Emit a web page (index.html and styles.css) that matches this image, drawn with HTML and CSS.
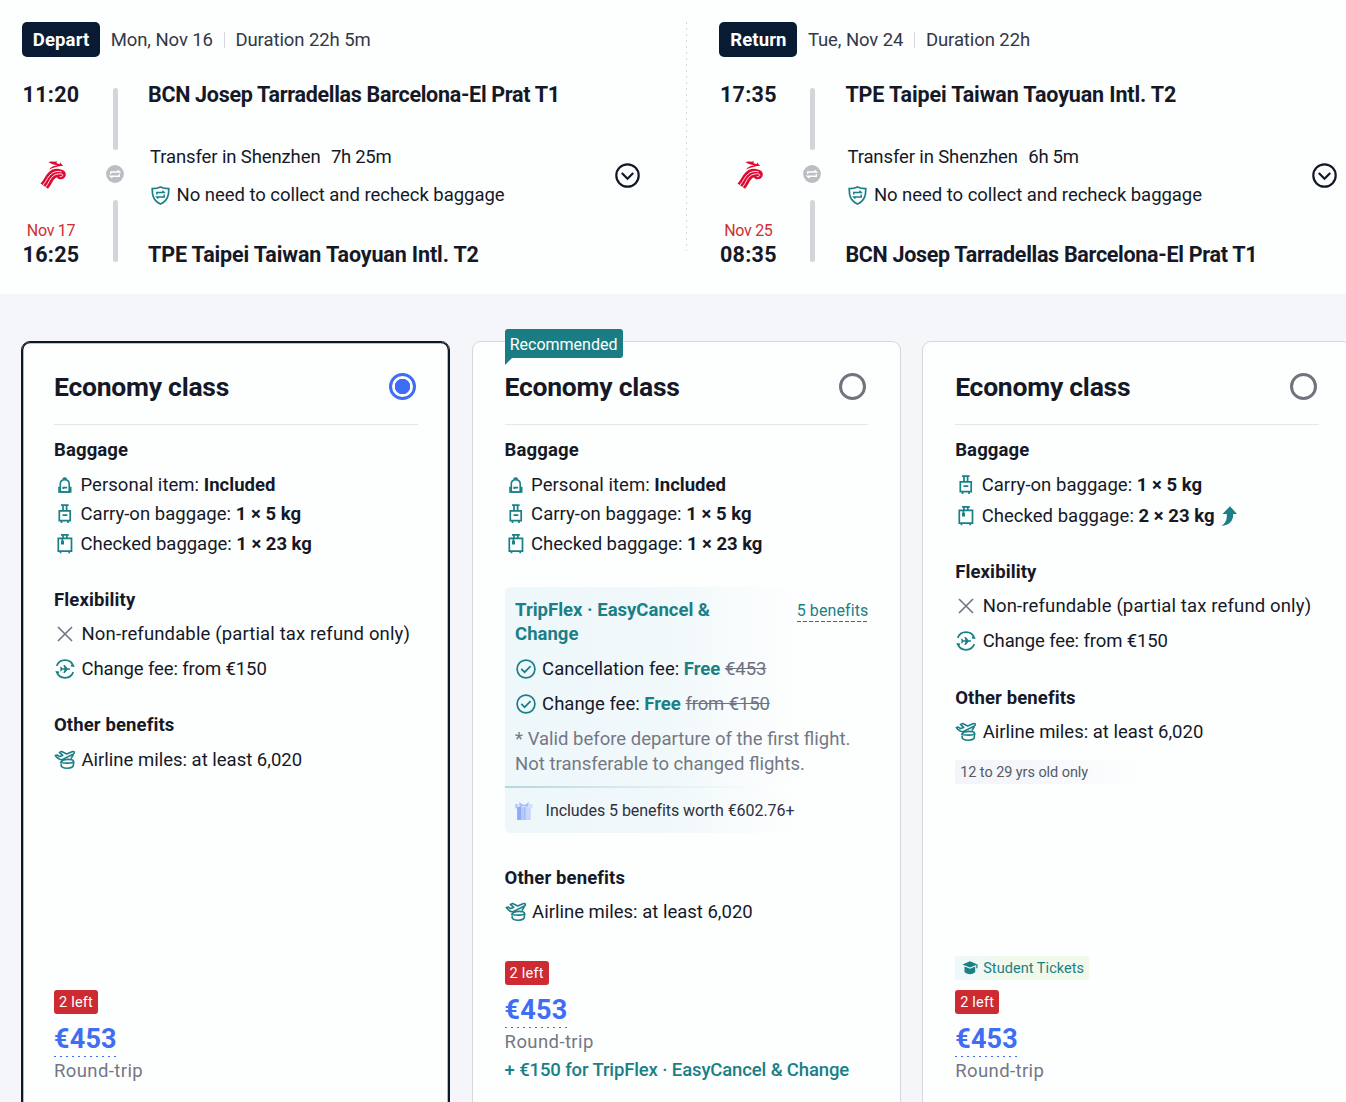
FILE: index.html
```html
<!DOCTYPE html>
<html lang="en">
<head>
  <meta charset="UTF-8" />
  <meta name="viewport" content="width=device-width, initial-scale=1.0" />
  <title>Select your fare</title>
  <link rel="stylesheet" href="styles.css">
</head>
<body>
  <!-- Shared icons -->
  <svg class="sprite" aria-hidden="true">
    <symbol id="i-logo" viewBox="0 0 26 28">
      <path d="M.5 22.5C5 17.5 6.500 11.500 12 8.700 15.500 7.400 19 7.800 21 8.600 24.500 9.300 26 11.500 25.800 14 25.500 17 22.500 18.600 19.500 18.200 17.800 17.800 17 16.800 17 16.200 13 17.500 12 23 8 27.700Z" fill="#df0a32"/>
      <path d="M2.600 24.600C7 19.500 8 14.500 12.500 12 15.500 10.300 18.500 10.100 21.500 10.800M5.400 26.400C9.500 21 10.200 16.500 14 14.300 16.500 12.900 20.500 12.300 22.300 13.200 23.500 14.600 22 16 19.700 15.600" fill="none" stroke="#fdfefe" stroke-width=".9"/>
      <path d="M9 8.600C11 5.800 14 4.600 17.500 4.200L13.500 3.500C11.500 3.100 10.500 1.600 8.300 1.200 11-.2 13.500 1.300 17 .3L16.400 2 19.300 3.200 20.700 1.600C21.200 3.300 22.500 4.200 23.300 4.800 17 5.500 13 6.500 9 8.600Z" fill="#df0a32"/>
    </symbol>
    <symbol id="i-transfer" viewBox="0 0 18 18">
      <circle cx="9" cy="9" r="8.900" fill="#bbbdc2"/>
      <path d="M4.700 9V7h8.800L11.600 5.300M13.300 9v2.200H4.500L6.400 12.900" fill="none" stroke="#fff" stroke-width="1.400"/>
    </symbol>
    <symbol id="i-shield" viewBox="0 0 19 19">
      <g fill="none" stroke="#1b7f86" stroke-width="1.700">
        <path d="M9.500 1C7 2.400 4.200 2.700 1.200 2.700 1.200 9 2 14.500 9.500 18 17 14.500 17.800 9 17.800 2.700 14.800 2.700 12 2.400 9.500 1Z"/>
        <path d="M5.800 8.600V6.400h7.200L11.500 4.900M13.200 8.400v2.600H5.800L7.300 12.600" stroke-width="1.500"/>
      </g>
    </symbol>
    <symbol id="i-expand" viewBox="0 0 25 25">
      <g fill="none" stroke="#11182a" stroke-width="2.200">
        <circle cx="12.500" cy="12.500" r="11.200"/>
        <path d="m6.800 10 5.700 5.700 5.700-5.700"/>
      </g>
    </symbol>
    <symbol id="i-personal" viewBox="0 0 22 22">
      <g fill="none" stroke="#1b7f86" stroke-width="1.600">
        <path d="M6.300 18V10C6.300 7.200 8 5.700 10.700 5.700S15.200 7.200 15.200 10V18Z"/>
        <path d="M6 13.500H5V18h11.700v-4.500h-1M9 5.600c0-2 3.400-2 3.400 0M8.400 13.600h4.700M9.300 13.400v1.500"/>
      </g>
    </symbol>
    <symbol id="i-carry" viewBox="0 0 22 22">
      <path d="M7 2.200h7.600M9 2.200v5.500M12.600 2.200v5.500M5.300 7.900h10.900v9.700H5.300ZM8.500 12.100h4.800M7.500 18v2M14 18v2" fill="none" stroke="#1b7f86" stroke-width="1.700"/>
    </symbol>
    <symbol id="i-checked" viewBox="0 0 22 22">
      <path d="M7 1.900h7.800M9 2v3.500M12.800 2v3.500M4.300 5.400h13.200v12.800H4.300ZM6.500 18.400v1.800M15.200 18.400v1.800M8.400 5.600v3" fill="none" stroke="#1b7f86" stroke-width="1.700"/>
      <path d="M7 7.800h3v3.700H7Z" fill="#1b7f86"/>
    </symbol>
    <symbol id="i-cross" viewBox="0 0 22 22">
      <path d="m4 4 14 14M18 4 4 18" fill="none" stroke="#71747f" stroke-width="1.600"/>
    </symbol>
    <symbol id="i-change" viewBox="0 0 22 22">
      <path d="M2.700 7.900a8.900 8.900 0 0 1 16.600 0l-2.400-.3M19.300 14.100a8.900 8.900 0 0 1-16.600 0l2.400.3" fill="none" stroke="#1b7f86" stroke-width="1.700"/>
      <path d="M6 8.800h1l1.400 1.500h2.100L9.300 7h1.400l2.900 3.300h2.100q1.300.7 0 1.400h-2.100L10.700 15H9.300l1.200-3.300H8.400L7 13.200H6l.6-2.200Z" fill="#1b7f86"/>
    </symbol>
    <symbol id="i-miles" viewBox="0 0 22 22">
      <g fill="none" stroke="#1b7f86" stroke-width="1.600" stroke-linejoin="round">
        <path d="M1.300 6.600 3.300 6 5.300 7.600 8.700 6.400 5.400 3.400 7.700 2.600 12.700 4.900 18 2.700C20.700 2 21.200 4 19 5.200L8 10.600C5 11.200 3.500 9.500 1.300 6.600Z"/>
        <path d="M19.300 5.500 17 9.700M6.500 14C7.500 11.500 10.500 10.400 13.800 10.400s5.700.7 5.700 1.800-2.500 1.900-5.700 1.900S8.500 13.800 6.500 13.600M7.300 15c-1 2.800 1.700 4.200 6 4.200s7-1.700 5.800-4.300M19.500 12.300c.5 1.500.3 2.300-.4 2.800"/>
      </g>
    </symbol>
    <symbol id="i-check" viewBox="0 0 22 22">
      <g fill="none" stroke="#1b7f86" stroke-width="1.700">
        <circle cx="11" cy="11" r="8.900"/>
        <path d="m6.300 10.900 3.300 3.300 6-6"/>
      </g>
    </symbol>
    <symbol id="i-gift" viewBox="0 0 18 19">
      <path d="M2.200 6h13.600v13H2.200Z" fill="#c8d6fc"/>
      <path d="M.5 3h17v4.200H.5Z" fill="#d5dffd"/>
      <path d="M2.200 6h4.300v13H2.200Z" fill="#8fabf5"/>
      <path d="M8.800 6h1.700v13H8.800ZM.5 3.200l1.200-.5v4.500H.5Z" fill="#a3b9f8"/>
      <path d="M4 1l5 3.500L14 .8 12.500 6 9 4.700 5 6Z" fill="#a9bef9"/>
      <path d="M6 6.500h2.200V19H6Z" fill="#b5c7fa"/>
    </symbol>
    <symbol id="i-cap" viewBox="0 0 16 14">
      <path d="M8 .3 15.500 3.400 8 6.500.4 3.400ZM2.500 5.600 8 7.800l5.200-2.200v5.600C11.500 12.500 9.700 13.200 8 13.200S4.300 12.500 2.500 11.200Z" fill="#1b7f86"/>
      <path d="M14.900 3.500v3.800" stroke="#1b7f86" stroke-width="1.300"/>
    </symbol>
    <symbol id="i-up" viewBox="0 0 16 20">
      <path d="M9 .2 16 8H12.200C12.500 14 9 19.500.2 19.800 4.500 17.500 6 14 5.800 8H1.500Z" fill="#1b7f86"/>
    </symbol>
  </svg>

  <div class="flights">
    <section class="flight">
      <div class="flight-head">
        <span class="badge">Depart</span>
        <span class="date">Mon, Nov 16</span>
        <span class="duration">Duration 22h 5m</span>
      </div>
      <div class="route">
        <div class="times">
          <b>11:20</b>
          <svg class="logo"><use href="#i-logo"/></svg>
          <span class="next-day">Nov 17</span>
          <b>16:25</b>
        </div>
        <div class="track">
          <i></i>
          <svg><use href="#i-transfer"/></svg>
          <i></i>
        </div>
        <div class="stops">
          <b class="long">BCN Josep Tarradellas Barcelona-El Prat T1</b>
          <div class="transfer">Transfer in Shenzhen <span>7h 25m</span></div>
          <div class="recheck"><svg><use href="#i-shield"/></svg>No need to collect and recheck baggage</div>
          <b>TPE Taipei Taiwan Taoyuan Intl. T2</b>
        </div>
        <svg class="expand"><use href="#i-expand"/></svg>
      </div>
    </section>
    <div class="flight-divider"></div>
    <section class="flight">
      <div class="flight-head">
        <span class="badge">Return</span>
        <span class="date">Tue, Nov 24</span>
        <span class="duration">Duration 22h</span>
      </div>
      <div class="route">
        <div class="times">
          <b>17:35</b>
          <svg class="logo"><use href="#i-logo"/></svg>
          <span class="next-day">Nov 25</span>
          <b>08:35</b>
        </div>
        <div class="track">
          <i></i>
          <svg><use href="#i-transfer"/></svg>
          <i></i>
        </div>
        <div class="stops">
          <b>TPE Taipei Taiwan Taoyuan Intl. T2</b>
          <div class="transfer">Transfer in Shenzhen <span>6h 5m</span></div>
          <div class="recheck"><svg><use href="#i-shield"/></svg>No need to collect and recheck baggage</div>
          <b class="long">BCN Josep Tarradellas Barcelona-El Prat T1</b>
        </div>
        <svg class="expand"><use href="#i-expand"/></svg>
      </div>
    </section>
  </div>

  <main class="fares">
    <article class="card selected">
      <header class="card-head"><h2>Economy class</h2><span class="radio on"></span></header>
      <h3>Baggage</h3>
      <ul class="bags">
        <li><svg><use href="#i-personal"/></svg><span>Personal item: <b>Included</b></span></li>
        <li><svg><use href="#i-carry"/></svg><span>Carry-on baggage: <b>1 × 5 kg</b></span></li>
        <li><svg><use href="#i-checked"/></svg><span class="snug">Checked baggage: <b>1 × 23 kg</b></span></li>
      </ul>
      <h3>Flexibility</h3>
      <ul class="rules">
        <li><svg><use href="#i-cross"/></svg><span class="wide">Non-refundable (partial tax refund only)</span></li>
        <li><svg><use href="#i-change"/></svg><span class="narrow">Change fee: from €150</span></li>
      </ul>
      <h3>Other benefits</h3>
      <ul class="rules">
        <li><svg><use href="#i-miles"/></svg><span>Airline miles: at least 6,020</span></li>
      </ul>
      <footer>
        <span class="left">2 left</span>
        <span class="price">€453</span>
        <span class="trip">Round-trip</span>
      </footer>
    </article>

    <article class="card">
      <span class="ribbon">Recommended</span>
      <header class="card-head"><h2>Economy class</h2><span class="radio"></span></header>
      <h3>Baggage</h3>
      <ul class="bags">
        <li><svg><use href="#i-personal"/></svg><span>Personal item: <b>Included</b></span></li>
        <li><svg><use href="#i-carry"/></svg><span>Carry-on baggage: <b>1 × 5 kg</b></span></li>
        <li><svg><use href="#i-checked"/></svg><span class="snug">Checked baggage: <b>1 × 23 kg</b></span></li>
      </ul>
      <div class="flex-box">
        <div class="flex-head">
          <b>TripFlex · EasyCancel &amp;<br>Change</b>
          <a>5 benefits</a>
        </div>
        <ul class="rules">
          <li><svg><use href="#i-check"/></svg><span>Cancellation fee: <em>Free</em> <s>€453</s></span></li>
          <li><svg><use href="#i-check"/></svg><span>Change fee: <em>Free</em> <s class="narrow">from €150</s></span></li>
        </ul>
        <p>* Valid before departure of the first flight.<br>Not transferable to changed flights.</p>
        <div class="gift"><svg><use href="#i-gift"/></svg>Includes 5 benefits worth €602.76+</div>
      </div>
      <h3>Other benefits</h3>
      <ul class="rules">
        <li><svg><use href="#i-miles"/></svg><span>Airline miles: at least 6,020</span></li>
      </ul>
      <footer>
        <span class="left">2 left</span>
        <span class="price">€453</span>
        <span class="trip">Round-trip</span>
        <span class="extra">+ €150 for TripFlex · EasyCancel &amp; Change</span>
      </footer>
    </article>

    <article class="card">
      <header class="card-head"><h2>Economy class</h2><span class="radio"></span></header>
      <h3>Baggage</h3>
      <ul class="bags">
        <li><svg><use href="#i-carry"/></svg><span>Carry-on baggage: <b>1 × 5 kg</b></span></li>
        <li class="upgraded"><svg><use href="#i-checked"/></svg><span>Checked baggage: <b>2 × 23 kg</b></span><svg class="up"><use href="#i-up"/></svg></li>
      </ul>
      <h3>Flexibility</h3>
      <ul class="rules">
        <li><svg><use href="#i-cross"/></svg><span class="wide">Non-refundable (partial tax refund only)</span></li>
        <li><svg><use href="#i-change"/></svg><span class="narrow">Change fee: from €150</span></li>
      </ul>
      <h3>Other benefits</h3>
      <ul class="rules">
        <li><svg><use href="#i-miles"/></svg><span>Airline miles: at least 6,020</span></li>
      </ul>
      <div class="age">12 to 29 yrs old only</div>
      <footer>
        <span class="student"><svg><use href="#i-cap"/></svg>Student Tickets</span>
        <span class="left">2 left</span>
        <span class="price">€453</span>
        <span class="trip">Round-trip</span>
      </footer>
    </article>
  </main>
</body>
</html>
```
FILE: styles.css
```css
* { box-sizing: border-box; }

html, body {
  margin: 0;
  padding: 0;
  height: 1102px;
  overflow: hidden;
}

body {
  background-color: #f5f6fa;
  color: #151927;
  font-family: Roboto, "Liberation Sans", sans-serif;
  font-size: 18.5px;
  line-height: 24px;
}

h2, h3, p, ul { margin: 0; padding: 0; }
ul { list-style: none; }
svg { display: block; flex: none; }
.sprite { display: none; }

/* ===== Flights ===== */
.flights {
  height: 294px;
  padding: 22px 0 0 22px;
  background-color: #fdfefe;
  display: flex;
  white-space: nowrap;
}

.flight { width: 664px; flex: none; }

.flight-divider {
  width: 33.4px;
  height: 229px;
  flex: none;
  background: repeating-linear-gradient(#d3d5d9 0 2px, transparent 2px 6px) 0 0 / 1px 100% no-repeat;
}

.flight-head {
  display: flex;
  align-items: center;
  height: 35px;
  color: #333847;
  letter-spacing: -0.08px;
}

.badge {
  padding: 0 10.8px;
  height: 35px;
  line-height: 36px;
  border-radius: 5px;
  background-color: #081b33;
  color: #fff;
  font-weight: 700;
  letter-spacing: 0.13px;
}

.date { margin-left: 10.5px; }

.duration {
  margin-left: 11px;
  padding-left: 11.5px;
  background: linear-gradient(#d5d7dc, #d5d7dc) 0 4px / 1px 16px no-repeat;
}

.route {
  display: flex;
  padding-top: 26px;
}

.route b { font-size: 21.5px; }

.times {
  width: 58px;
  display: flex;
  flex-direction: column;
  align-items: center;
}
.times b { letter-spacing: 0.3px; }

.logo {
  width: 26px;
  height: 28px;
  margin: 54px 0 30px 4px;
}

.next-day {
  color: #d02f32;
  font-size: 16px;
  letter-spacing: -0.3px;
}

.track {
  width: 18px;
  margin: 5px 0 0 26px;
  display: flex;
  flex-direction: column;
  align-items: center;
}
.track i {
  width: 5px;
  height: 62px;
  border-radius: 3px;
  background-color: #d4d5da;
}
.track svg {
  width: 18px;
  height: 18px;
  margin: 15px 0 17px;
}

.stops {
  width: 467px;
  margin-left: 24px;
}
.stops b {
  display: block;
  letter-spacing: -0.13px;
}
.stops b.long { letter-spacing: -0.3px; }
.transfer {
  margin: 38px 0 14px 2px;
  letter-spacing: -0.12px;
}
.transfer span {
  margin-left: 6px;
  letter-spacing: -0.3px;
}
.recheck {
  display: flex;
  align-items: center;
  gap: 6.5px;
  margin: 0 0 36px 3px;
  letter-spacing: -0.04px;
}
.recheck svg { width: 19px; height: 19px; }

.expand {
  width: 25px;
  height: 25px;
  margin-top: 80px;
}

/* ===== Fare cards ===== */
.fares {
  display: flex;
  gap: 21.6px;
  padding: 47px 0 0 21px;
}

.card {
  position: relative;
  width: 429px;
  height: 800px;
  flex: none;
  display: flex;
  flex-direction: column;
  padding: 0 31.2px 57px 32px;
  border: 1px solid #d5d7dd;
  border-radius: 9px;
  background-color: #fdfefe;
  white-space: nowrap;
}
.card.selected {
  border-color: #0c1727;
  box-shadow: inset 0 0 0 1.3px #0c1727;
}

.card-head {
  display: flex;
  align-items: center;
  justify-content: space-between;
  height: 83px;
  padding: 6px 2px 0 0;
  margin-bottom: 13px;
  background: linear-gradient(#e4e6e8, #e4e6e8) 0 100% / 100% 1px no-repeat;
}
.card h2 {
  font-size: 26.5px;
  line-height: 32px;
  letter-spacing: -0.25px;
}
.card h3 {
  font-size: 18.5px;
  line-height: 24px;
  letter-spacing: 0.12px;
}

.radio {
  width: 27px;
  height: 27px;
  border: 3px solid #70747f;
  border-radius: 50%;
}
.radio.on {
  border-color: #3f6df3;
  background: radial-gradient(#3f6df3 7.5px, transparent 8px);
}

.bags {
  margin: 8px 0 29.4px;
  letter-spacing: 0.03px;
}
.bags li, .rules li {
  display: flex;
  align-items: center;
  gap: 4.5px;
  height: 29.6px;
}
.bags li.upgraded {
  height: 31.3px;
  padding-top: 1px;
}
.rules { margin: 4.6px 0 26.7px; }
.rules li { height: 35px; gap: 5.5px; }
li svg { width: 22px; height: 22px; }
li svg.up {
  width: 16px;
  height: 20px;
  margin-left: 2px;
}
.wide { letter-spacing: 0.14px; }
.narrow { letter-spacing: -0.12px; }
.snug { letter-spacing: -0.03px; }

.ribbon {
  position: absolute;
  left: 32px;
  top: -13px;
  width: 118px;
  height: 29px;
  border-radius: 3px 3px 3px 0;
  background-color: #1b7d84;
  color: #fff;
  font-size: 16px;
  line-height: 31px;
  text-align: center;
}
.ribbon::after {
  content: "";
  position: absolute;
  left: 0;
  top: 29px;
  border-top: 7px solid #1b7d84;
  border-right: 7px solid transparent;
}

/* ===== TripFlex box ===== */
.flex-box {
  height: 246px;
  margin: -1px 0 32.5px;
  padding: 10.5px 0 0 10.5px;
  border-radius: 5px;
  background: linear-gradient(90deg, #eef7fa 0, #f0f8fa 42%, #fdfefe 80%);
}
.flex-head {
  display: flex;
  justify-content: space-between;
  align-items: flex-start;
  color: #1b7f86;
  line-height: 24.5px;
}
.flex-head a {
  height: 24px;
  background: repeating-linear-gradient(90deg, #1b7f86 0 4px, transparent 4px 6px) 0 100% / 100% 1px no-repeat;
  font-size: 16px;
  line-height: 26px;
  letter-spacing: 0.1px;
}
.flex-box .rules { margin: 5px 0; }
.flex-box .rules li { gap: 5px; }
.flex-box em {
  color: #1b7f86;
  font-style: normal;
  font-weight: 700;
}
.flex-box s { color: #6f7380; }
.flex-box p {
  color: #747884;
  line-height: 25px;
}
.gift {
  display: flex;
  align-items: center;
  gap: 12.5px;
  height: 47px;
  margin: 9px 0 0 -10.5px;
  padding: 4px 0 0 10.5px;
  background: linear-gradient(90deg, #b3d8db, #dbeaf0 35%, #fdfefe 75%) 0 0 / 100% 2px no-repeat;
  color: #2c3140;
  font-size: 16px;
  letter-spacing: -0.06px;
}
.gift svg {
  width: 18px;
  height: 19px;
  margin-top: -2px;
}

.age {
  width: 190px;
  height: 24px;
  margin-top: -15.8px;
  padding-left: 5px;
  border-radius: 3px;
  background: linear-gradient(90deg, #f4f5f9, #f5f6fa 35%, #fdfefe);
  color: #555a67;
  font-size: 14.5px;
  line-height: 25px;
  letter-spacing: -0.07px;
}

/* ===== Price ===== */
.card footer {
  display: flex;
  flex-direction: column;
  align-items: flex-start;
  margin-top: auto;
}
.left {
  height: 24px;
  padding: 0 5px;
  border-radius: 3px;
  background-color: #cd2b31;
  color: #fff;
  font-size: 14.5px;
  line-height: 25px;
  letter-spacing: 0.22px;
}
.price {
  margin: 8px 0 2px;
  height: 35px;
  background: repeating-linear-gradient(90deg, #3f6df3 0 2px, transparent 2px 6px) 0 100% / 100% 1px no-repeat;
  color: #3f6df3;
  font-size: 27px;
  font-weight: 700;
  line-height: 34px;
  letter-spacing: 0.2px;
}
.trip {
  color: #747884;
  letter-spacing: 0.4px;
}
.extra {
  margin: 4px 0 1px;
  color: #1b7f86;
  font-weight: 500;
  letter-spacing: -0.13px;
}
.student {
  display: flex;
  align-items: center;
  gap: 5px;
  height: 24px;
  margin-bottom: 10px;
  padding: 0 5px 0 7px;
  border-radius: 2px;
  background: linear-gradient(90deg, #eff8fb, #f0f9ea 40%);
  color: #1b7f86;
  font-size: 14.5px;
  line-height: 25px;
  letter-spacing: 0.05px;
}
.student svg { width: 16px; height: 14px; }
```
